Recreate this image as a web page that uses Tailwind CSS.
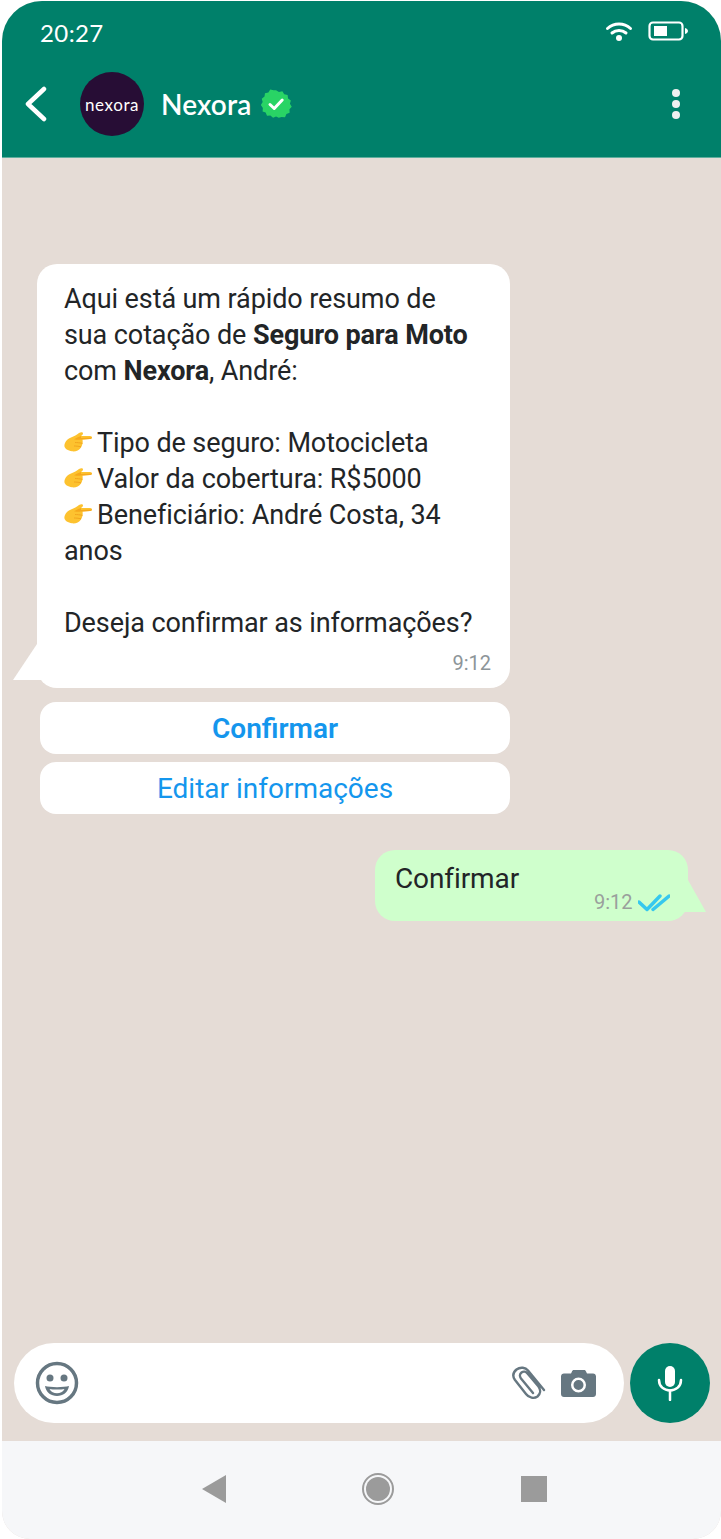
<!DOCTYPE html>
<html lang="pt-BR">
<head>
<meta charset="utf-8">
<script src="https://cdn.jsdelivr.net/npm/@tailwindcss/browser@4"></script>
</head>
<body class="bg-white">
<div class="w-[721px] h-[1539px] pl-[2px] pt-[1px] overflow-hidden bg-white font-['Roboto',sans-serif]">
  <div class="w-[719px] h-[1538px] rounded-t-[40px] rounded-b-[28px] overflow-hidden flex flex-col bg-[#e5dcd6]">
    <!-- header -->
    <header class="h-[157px] shrink-0 bg-[#00806a] border-b border-[#5fae9e] text-white flex flex-col">
      <div class="h-[62px] pl-[38px] pr-[33px] pt-[17px] flex items-start justify-between">
        <span class="font-['Lato',sans-serif] text-[24px] leading-[29px] tracking-[0.4px]">20:27</span>
        <div class="flex items-center gap-[15px] pt-[3px]">
          <svg width="28" height="20" viewBox="0 0 28 20" fill="none" stroke="white" stroke-width="3" stroke-linecap="round"><path d="M2.500 7.500C9 1.500 19 1.500 25.500 7.500"/><path d="M7 12C11 8.500 17 8.500 21 12"/><circle cx="14" cy="17" r="3" fill="white" stroke="none"/></svg>
          <svg width="40" height="20" viewBox="0 0 40 20" fill="none"><rect x="1.500" y="1.500" width="33" height="17" rx="3.500" stroke="white" stroke-width="2.200"/><rect x="6" y="5" width="13" height="10" fill="white"/><path d="M37 7C39 7.500 40 9 40 10C40 11 39 12.500 37 13Z" fill="white"/></svg>
        </div>
      </div>
      <div class="flex items-center h-[64px] pl-[22px] pr-[41px] mt-[9px]">
        <svg width="24" height="36" viewBox="0 0 24 36" fill="none" stroke="white" stroke-width="4.500" stroke-linecap="round" stroke-linejoin="round"><path d="M20 3L4 18L20 33"/></svg>
        <div class="ml-[32px] w-[64px] h-[64px] rounded-full bg-[#270d35] flex items-center justify-center">
          <span class="font-['Lato',sans-serif] text-[17px] tracking-[0.6px] leading-none text-white">nexora</span>
        </div>
        <span class="ml-[18px] font-['Lato',sans-serif] font-semibold text-[28px] tracking-[0.15px] leading-[34px] -translate-x-[1px]">Nexora</span>
        <svg class="ml-[8px]" width="32" height="32" viewBox="0 0 32 32"><path fill="#29d465" d="M16 1l3.200 2 3.700-.8 2 3.200 3.700.8.500 3.700 3 2.300-1 3.600 2 3.200-2.500 2.800.2 3.800-3.500 1.300-1.500 3.500-3.800-.2L19 31l-3-1.500-3.200 1.500-2.900-2.500-3.700.2-1.500-3.500L1.400 24l.3-3.800L-.5 17l2-3.200-1-3.600 3-2.300.5-3.700 3.700-.8 2-3.200 3.700.8z" transform="translate(1.300 1.300) scale(.92)"/><path d="M10 16.500l4.200 4 8-8.500" fill="none" stroke="white" stroke-width="3" stroke-linecap="round" stroke-linejoin="round"/></svg>
        <div class="ml-auto flex flex-col gap-[3px]">
          <span class="w-[8px] h-[8px] rounded-full bg-[#f0f0f0]"></span>
          <span class="w-[8px] h-[8px] rounded-full bg-[#f0f0f0]"></span>
          <span class="w-[8px] h-[8px] rounded-full bg-[#f0f0f0]"></span>
        </div>
      </div>
    </header>

    <!-- chat -->
    <main class="flex-1 relative flex flex-col pt-[106px]">
      <div class="relative ml-[35px] w-[473px] h-[424px] bg-white rounded-[20px] pl-[27px] pr-[10px] pt-[17px] text-[#222527] text-[27px] leading-[36px] tracking-[-0.1px]">
        <svg class="absolute left-[-24px] bottom-[8px]" width="30" height="36" viewBox="0 0 30 36"><path d="M24 0L0 36H30V0Z" fill="white"/></svg>
        <p>Aqui está um rápido resumo de<br>sua cotação de <b class="font-bold">Seguro para Moto</b><br>com <b class="font-bold">Nexora</b>, André:</p>
        <p class="mt-[36px] flex items-center"><svg class="mr-[5px] shrink-0" width="28" height="24" viewBox="0 0 28 24"><use href="#hand"/></svg>Tipo de seguro: Motocicleta</p>
        <p class="flex items-center"><svg class="mr-[5px] shrink-0" width="28" height="24" viewBox="0 0 28 24"><use href="#hand"/></svg>Valor da cobertura: R$5000</p>
        <p class="flex items-center"><svg class="mr-[5px] shrink-0" width="28" height="24" viewBox="0 0 28 24"><use href="#hand"/></svg>Beneficiário: André Costa, 34</p>
        <p>anos</p>
        <p class="mt-[36px]">Deseja confirmar as informações?</p>
        <span class="absolute right-[19px] bottom-[14px] text-[20px] leading-[22px] tracking-normal text-[#8d9599]">9:12</span>
      </div>
      <button class="ml-[38px] mt-[14px] w-[470px] h-[52px] bg-white rounded-[16px] text-[#1496ed] text-[28px] font-semibold leading-[54px] text-center">Confirmar</button>
      <button class="ml-[38px] mt-[8px] w-[470px] h-[52px] bg-white rounded-[16px] text-[#1496ed] text-[28px] leading-[54px] text-center">Editar informações</button>

      <div class="relative ml-[373px] mt-[36px] w-[313px] h-[71px] bg-[#cfffcc] rounded-[20px] pl-[20px] pt-[11px] text-[#222527] text-[28px] leading-[36px] tracking-[-0.1px]">
        <svg class="absolute right-[-18px] bottom-[9px]" width="24" height="32" viewBox="0 0 24 32"><path d="M6 0L24 32H0V0Z" fill="#cfffcc"/></svg>
        Confirmar
        <div class="absolute left-[219px] bottom-[8px] flex items-center gap-[5px]">
          <span class="text-[20px] leading-[22px] tracking-normal text-[#9a9f9c]">9:12</span>
          <svg width="32" height="20" viewBox="0 0 32 20" fill="none" stroke="#36c8ee" stroke-width="3.400" stroke-linecap="round" stroke-linejoin="round"><path d="M1 10L9 17.500L22 4"/><path d="M15 17.500L31 4"/></svg>
        </div>
      </div>

      <!-- composer -->
      <div class="mt-auto mb-[18px] ml-[12px] flex gap-[6px] items-center">
        <div class="w-[610px] h-[80px] bg-white rounded-full flex items-center pl-[21px] pr-[28px]">
          <svg width="44" height="44" viewBox="0 0 44 44"><circle cx="22" cy="22" r="19.500" fill="none" stroke="#667781" stroke-width="3.500"/><circle cx="15" cy="17" r="3.500" fill="#667781"/><circle cx="29" cy="17" r="3.500" fill="#667781"/><path d="M10 25C15 26.500 29 26.500 34 25C33 31.500 28 35 22 35C16 35 11 31.500 10 25Z" fill="#667781"/><path d="M14.500 28C18 28.700 26 28.700 29.500 28C28 31 25 32.300 22 32.300C19 32.300 16 31 14.500 28Z" fill="white"/></svg>
          <svg class="ml-auto" width="36" height="34" viewBox="0 0 36 34" fill="none" stroke="#667781" stroke-width="2.400" stroke-linecap="round" stroke-linejoin="round"><path d="M33 24L17 4.500C14.500 1.500 9.500.5 5.500 3.500C2 6.500 1.500 10.500 4 14L15 28C18 32 23 33 26.500 30.500C29.500 28 30 24 27.500 20.500L16.500 7.500C15 5.500 12.500 5 10.500 6.500C8.500 8 8.500 10.500 10 12.500L22 27"/></svg>
          <svg class="ml-[14px]" width="35" height="27" viewBox="0 0 35 27"><path fill-rule="evenodd" fill="#667781" d="M11 1.500C11.300.5 12 0 13 0H23C24 0 24.700.5 25 1.500L26 3.500H32C33.700 3.500 35 4.800 35 6.500V24C35 25.700 33.700 27 32 27H3C1.300 27 0 25.700 0 24V6.500C0 4.800 1.300 3.500 3 3.500H10ZM17.500 7.500A7.500 7.500 0 1 0 17.500 22.500A7.500 7.500 0 1 0 17.500 7.500ZM17.500 10A5 5 0 1 1 17.500 20A5 5 0 1 1 17.500 10Z"/></svg>
        </div>
        <div class="w-[80px] h-[80px] rounded-full bg-[#00806a] flex items-center justify-center">
          <svg width="26" height="36" viewBox="0 0 26 36" fill="none" stroke="white" stroke-width="2.500" stroke-linecap="round"><rect x="8" y="1" width="10" height="21" rx="5" fill="white" stroke="none"/><path d="M2 15C2 21.500 7 25.500 13 25.500C19 25.500 24 21.500 24 15"/><path d="M13 25.500V35"/></svg>
        </div>
      </div>
    </main>

    <!-- nav -->
    <nav class="h-[98px] shrink-0 bg-[#f6f7f9] flex items-center justify-center pb-[2px] pl-[25px]">
      <div class="flex items-center">
        <svg width="24" height="28" viewBox="0 0 24 28"><path d="M24 0V28L0 14Z" fill="#9b9b9b"/></svg>
        <svg class="ml-[136px]" width="32" height="32" viewBox="0 0 32 32"><circle cx="16" cy="16" r="15" fill="none" stroke="#9b9b9b" stroke-width="2"/><circle cx="16" cy="16" r="12" fill="#9b9b9b"/></svg>
        <span class="ml-[127px] w-[26px] h-[26px] bg-[#9b9b9b]"></span>
      </div>
    </nav>
  </div>
</div>
<svg class="absolute w-0 h-0" aria-hidden="true">
  <defs>
    <g id="hand">
      <path d="M1 12C2 9.500 4 7.500 7 6.500C10 5.500 13 3.500 15 2C17 .8 19 1 19 2.500C19 3.500 18 4.200 17 5L26 5C27.500 5 28 5.800 28 6.600C28 7.500 27.300 8 26 8.100L18.500 8.600C19 11 18.500 14 17 16.500C15 19.500 11.500 20.800 8 20.300C4 19.800 .6 17.500 .4 15C.3 14 .6 13 1 12Z" fill="#fdc22f"/>
      <path d="M17 5C14.500 6 12 7 10 8.200C12.500 8.800 15.500 8.800 18.500 8.600L26 8.100C27.300 8 28 7.500 28 6.600L17 7Z" fill="#f6a81c"/>
      <path d="M11 11.500C13 11.500 15.500 11.800 18.500 12.300M10 15C12 15 14 15.200 17 15.800" fill="none" stroke="#f2a51d" stroke-width="1"/>
    </g>
  </defs>
</svg>
</body>
</html>
